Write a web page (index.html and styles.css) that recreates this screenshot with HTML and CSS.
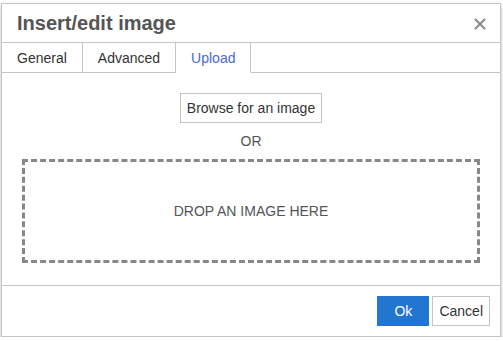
FILE: index.html
```html
<!DOCTYPE HTML>
<html>
<head>
<meta charset="utf-8">
<title>Insert/edit image</title>
<link rel="stylesheet" href="styles.css">
</head>
<body>
<div class="dialog">
  <div class="dlg-head">
    <span class="dlg-title">Insert/edit image</span>
    <svg class="dlg-close" width="12" height="12" viewBox="0 0 12 12"><path d="M1 1L11 11M11 1L1 11" stroke="#8a8a8a" stroke-width="2" fill="none"/></svg>
  </div>
  <div class="tabs">
    <div class="tab">General</div>
    <div class="tab">Advanced</div>
    <div class="tab active">Upload</div>
    <div class="tab-rest"></div>
  </div>
  <div class="dlg-body">
    <button class="btn">Browse for an image</button>
    <div class="or">OR</div>
    <div class="dropzone">DROP AN IMAGE HERE</div>
  </div>
  <div class="dlg-foot">
    <button class="btn primary">Ok</button>
    <button class="btn">Cancel</button>
  </div>
</div>
</body>
</html>
```

FILE: styles.css
```css
body {margin:0; background:#fff; font-family:"Liberation Sans", Arial, sans-serif; font-size:14px; color:#333;}
.dialog {margin:3px 0 0 1px; width:498px; height:332px; border:1px solid #c5c5c5; background:#fff; box-shadow:0 3px 5px rgba(0,0,0,0.25); display:flex; flex-direction:column;}
.dlg-head {height:38px; border-bottom:1px solid #c5c5c5; display:flex; align-items:center; justify-content:space-between; padding:0 14px 0 15px;}
.dlg-title {font-size:20px; font-weight:bold; color:#555; padding-top:1px;}
.dlg-close {display:block; margin-top:1px;}
.tabs {display:flex; height:30px; flex-shrink:0;}
.tab {padding:2px 15px 0 15px; line-height:27px; border-right:1px solid #c5c5c5; border-bottom:1px solid #c5c5c5; color:#333;}
.tab.active {color:#4a6ad6; border-bottom-color:transparent;}
.tab-rest {flex:1; border-bottom:1px solid #c5c5c5;}
.dlg-body {flex:1; display:flex; flex-direction:column; align-items:center; padding:20px 20px 0 20px;}
.btn {font-family:inherit; font-size:14px; color:#333; background:#fff; border:1px solid #c5c5c5; height:30px; padding:0 6px; margin:0; cursor:pointer;}
.or {margin-top:9px; line-height:18px; color:#555;}
.dropzone {margin-top:9px; align-self:stretch; height:98px; border:3px dashed #888; display:flex; align-items:center; justify-content:center; color:#555;}
.dlg-foot {height:51px; flex-shrink:0; border-top:1px solid #c5c5c5; display:flex; justify-content:flex-end; align-items:flex-start; gap:3px; padding:10px 10px 0 0; box-sizing:border-box;}
.btn.primary {background:#2276d2; border-color:#2276d2; color:#fff; width:52px;}
```
